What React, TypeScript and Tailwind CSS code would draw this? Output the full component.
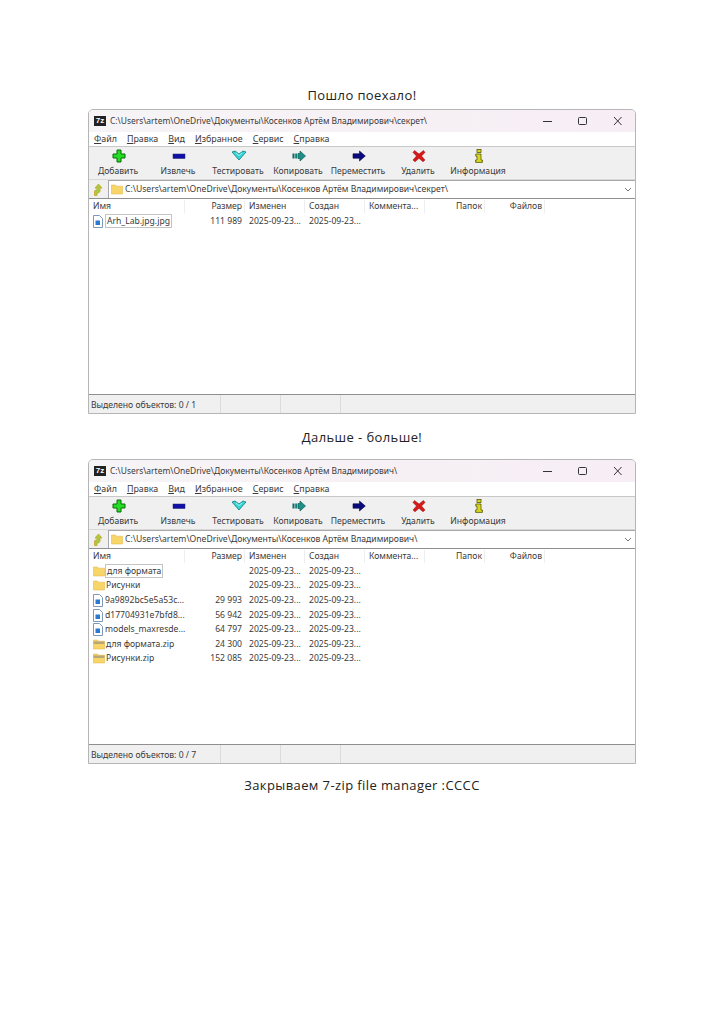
const ui = "font-['Noto_Sans','Open_Sans',sans-serif]";

function PlusIcon() {
  return (
    <svg width="14" height="14" viewBox="0 0 14 14">
      <path d="M5 1h4v4h4v4H9v4H5V9H1V5h4z" fill="#22dd22" stroke="#0a6a0a" strokeWidth="1" />
    </svg>
  );
}

function MinusIcon() {
  return (
    <svg width="14" height="14" viewBox="0 0 14 14">
      <rect x="1" y="5" width="12" height="4.5" fill="#1010a8" stroke="#20206a" strokeWidth="0.5" />
    </svg>
  );
}

function CheckIcon() {
  return (
    <svg width="16" height="14" viewBox="0 0 16 14">
      <path d="M1 3l3-1 4 3 4-3 3 1-7 8z" fill="#35d6d6" stroke="#137a7a" strokeWidth="0.8" />
      <path d="M5 4l3 2.5L11 4" fill="none" stroke="#c8f5f5" strokeWidth="0.8" />
    </svg>
  );
}

function CopyIcon() {
  return (
    <svg width="14" height="14" viewBox="0 0 14 14">
      <rect x="0.5" y="4.5" width="2" height="5" fill="#0c6a66" />
      <rect x="3.2" y="4.5" width="2" height="5" fill="#0f7f78" />
      <path d="M6 4.5h2V2l5.5 5L8 12V9.5H6z" fill="#1d8f86" stroke="#0a4f4a" strokeWidth="0.6" />
    </svg>
  );
}

function MoveIcon() {
  return (
    <svg width="14" height="14" viewBox="0 0 14 14">
      <path d="M1 4.8h6.5V2l5.8 5-5.8 5V9.2H1z" fill="#0b0b80" stroke="#060640" strokeWidth="0.6" />
    </svg>
  );
}

function DeleteIcon() {
  return (
    <svg width="14" height="14" viewBox="0 0 14 14">
      <path d="M2.5 1.5L7 5l4.5-3.5 1.5 2L9.5 7l3.5 4-2 1.8L7 9.3l-4 3.5L1 11l3.5-4L1 3.5z" fill="#d81818" stroke="#8a1010" strokeWidth="0.5" />
    </svg>
  );
}

function InfoIcon() {
  return (
    <svg width="14" height="14" viewBox="0 0 14 14">
      <rect x="5" y="0.5" width="4" height="3" fill="#d8d820" stroke="#55550a" strokeWidth="0.8" />
      <path d="M3.8 5h5.2v6h1.4v2.4H3.6V11H5V7.2H3.8z" fill="#d8d820" stroke="#55550a" strokeWidth="0.8" />
    </svg>
  );
}

function FolderIcon({ zip }: { zip?: boolean }) {
  return (
    <svg width="12" height="11" viewBox="0 0 12 11" className="shrink-0">
      <path d="M0.5 2V1h4l1 1.2h6V10H0.5z" fill="#f8d568" stroke="#e0b040" strokeWidth="0.5" />
      {zip && <rect x="0.5" y="2.5" width="11" height="2.5" fill="#b8a878" />}
    </svg>
  );
}

function FileIcon() {
  return (
    <svg width="10" height="13" viewBox="0 0 10 13" className="shrink-0">
      <path d="M0.5 0.5h6l3 3v9h-9z" fill="#ffffff" stroke="#6f8fb0" strokeWidth="0.9" />
      <rect x="2.5" y="5.5" width="4.5" height="4.5" fill="#2a78d0" />
    </svg>
  );
}

function UpIcon() {
  return (
    <svg width="10" height="13" viewBox="0 0 10 13">
      <path d="M1.5 12.5V8l1-1h1.5V5H2l3.5-4L9 5H7v3.5L5.5 10H4v2.5z" fill="#a8cc40" stroke="#c8a428" strokeWidth="0.8" />
    </svg>
  );
}

function AppIcon() {
  return (
    <span className="flex h-[10px] w-[12px] items-center justify-center bg-[#222] font-['Liberation_Sans',sans-serif] text-[8px] leading-none font-bold text-white">
      7z
    </span>
  );
}

const tools = [
  { label: "Добавить", icon: <PlusIcon /> },
  { label: "Извлечь", icon: <MinusIcon /> },
  { label: "Тестировать", icon: <CheckIcon /> },
  { label: "Копировать", icon: <CopyIcon /> },
  { label: "Переместить", icon: <MoveIcon /> },
  { label: "Удалить", icon: <DeleteIcon /> },
  { label: "Информация", icon: <InfoIcon /> },
];

const menu = ["Файл", "Правка", "Вид", "Избранное", "Сервис", "Справка"];

type Row = { name: string; kind: "file" | "folder" | "zip"; size?: string; edit?: boolean };

function Window({ path, rows, total }: { path: string; rows: Row[]; total: number }) {
  return (
    <div className={`mx-[88px] flex h-[305px] w-[548px] flex-col overflow-hidden rounded-t-[5px] border border-[#b5b5b5] bg-[#f0f0f0] text-[8.6px] text-[#3a3a3a] ${ui}`}>
      <div className="flex h-[22px] shrink-0 items-center bg-gradient-to-r from-[#f6f4f6] to-[#f7eef5] pl-[5px]">
        <AppIcon />
        <span className="ml-[4px] flex-1 text-[8.45px] whitespace-nowrap">{path}</span>
        <svg width="80" height="12" viewBox="0 0 80 12" className="mr-[13px]" fill="none" stroke="#333" strokeWidth="1">
          <path d="M1 6.5h9" />
          <rect x="36.5" y="2.5" width="8" height="7" rx="1" />
          <path d="M72 2l7.5 8M79.5 2L72 10" />
        </svg>
      </div>
      <div className="flex h-[15px] shrink-0 items-center gap-[10px] border-b border-[#c8c8c8] bg-white pl-[5px] text-[8.9px]">
        {menu.map((m) => (
          <span key={m}>
            <span className="underline">{m[0]}</span>
            {m.slice(1)}
          </span>
        ))}
      </div>
      <div className="flex h-[33px] shrink-0 items-start border-b border-[#d8d8d8]">
        {tools.map((t) => (
          <div key={t.label} className="flex w-[60px] flex-col items-center pt-[2px]">
            <div className="flex h-[14px] items-center">{t.icon}</div>
            <span className="mt-[1px] mr-[2px] whitespace-nowrap leading-[14px]">{t.label}</span>
          </div>
        ))}
      </div>
      <div className="flex h-[18px] shrink-0 items-center pl-[4px]">
        <UpIcon />
        <div className="ml-[5px] flex h-[18px] flex-1 items-center border-t border-l border-[#a8a8a8] bg-white pl-[2px]">
          <FolderIcon />
          <span className="ml-[2px] flex-1 whitespace-nowrap">{path}</span>
          <svg width="8" height="5" viewBox="0 0 8 5" className="mr-[3px]" fill="none" stroke="#777">
            <path d="M1 1l3 3 3-3" />
          </svg>
        </div>
      </div>
      <div className="flex flex-1 flex-col border-y border-[#8f8f8f] bg-white">
        <div className="flex h-[15px] shrink-0 items-center">
          <span className="w-[96px] border-r border-[#eeeeee] pl-[4px]">Имя</span>
          <span className="w-[60px] border-r border-[#eeeeee] pr-[2px] text-right">Размер</span>
          <span className="w-[60px] border-r border-[#eeeeee] pl-[4px]">Изменен</span>
          <span className="w-[60px] border-r border-[#eeeeee] pl-[4px]">Создан</span>
          <span className="w-[60px] border-r border-[#eeeeee] pl-[4px] whitespace-nowrap">Коммента...</span>
          <span className="w-[60px] border-r border-[#eeeeee] pr-[2px] text-right">Папок</span>
          <span className="w-[60px] border-r border-[#eeeeee] pr-[2px] text-right">Файлов</span>
        </div>
        {rows.map((r) => (
          <div key={r.name} className="flex h-[14.6px] shrink-0 items-center">
            <div className="flex w-[96px] items-center pl-[4px]">
              {r.kind === "file" ? <FileIcon /> : <FolderIcon zip={r.kind === "zip"} />}
              <span className={`whitespace-nowrap ${r.edit ? "border border-[#c4c4c4] px-[1px] leading-[12px]" : ""} ${r.kind === "file" ? "ml-[2px]" : r.edit ? "" : "ml-[1px]"}`}>
                {r.name}
              </span>
            </div>
            <span className="w-[60px] pr-[3px] text-right">{r.size}</span>
            <span className="w-[60px] pl-[4px] whitespace-nowrap">2025-09-23...</span>
            <span className="w-[60px] pl-[4px] whitespace-nowrap">2025-09-23...</span>
          </div>
        ))}
      </div>
      <div className="flex h-[18px] shrink-0 items-center">
        <span className="flex h-full w-[132px] items-center border-r border-[#dcdcdc] pt-[2px] pl-[2px]">
          Выделено объектов: 0 / {total}
        </span>
        <span className="h-full w-[60px] border-r border-[#dcdcdc]" />
        <span className="h-full w-[60px] border-r border-[#dcdcdc]" />
      </div>
    </div>
  );
}

function Caption({ children, className }: { children: string; className: string }) {
  return (
    <p className={`text-center font-['Open_Sans',sans-serif] text-[13px] leading-[18px] tracking-[0.4px] text-[#222] ${className}`}>
      {children}
    </p>
  );
}

const base = "C:\\Users\\artem\\OneDrive\\Документы\\Косенков Артём Владимирович\\";

const secretRows: Row[] = [{ name: "Arh_Lab.jpg.jpg", kind: "file", size: "111 989", edit: true }];

const rootRows: Row[] = [
  { name: "для формата", kind: "folder", edit: true },
  { name: "Рисунки", kind: "folder" },
  { name: "9a9892bc5e5a53c...", kind: "file", size: "29 993" },
  { name: "d17704931e7bfd8...", kind: "file", size: "56 942" },
  { name: "models_maxresde...", kind: "file", size: "64 797" },
  { name: "для формата.zip", kind: "zip", size: "24 300" },
  { name: "Рисунки.zip", kind: "zip", size: "152 085" },
];

export default function App() {
  return (
    <div className="h-[1024px] w-[724px] overflow-hidden bg-white pt-[86px]">
      <Caption className="mb-[5px]">Пошло поехало!</Caption>
      <Window path={base + "секрет\\"} rows={secretRows} total={1} />
      <Caption className="mt-[14px] mb-[13px]">Дальше - больше!</Caption>
      <Window path={base} rows={rootRows} total={7} />
      <Caption className="mt-[12px]">Закрываем 7-zip file manager :СССС</Caption>
    </div>
  );
}
